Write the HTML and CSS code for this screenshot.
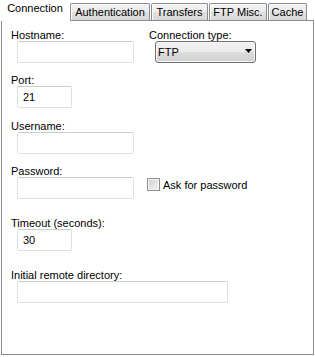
FILE: index.html
```html
<!DOCTYPE html>
<html lang="en">
<head>
  <meta charset="UTF-8">
  <meta name="viewport" content="width=device-width, initial-scale=1.0">
  <title>Site settings - Connection</title>

  <link rel="stylesheet" href="styles.css">
</head>
<body>
  <div class="dialog">
    <!-- Tab strip -->
    <div class="tabs">
      <div class="tab tab-active">Connection</div>
      <div class="tab tab-auth">Authentication</div>
      <div class="tab tab-transfers">Transfers</div>
      <div class="tab tab-misc">FTP Misc.</div>
      <div class="tab tab-cache">Cache</div>
    </div>

    <form class="panel">
      <div class="row">
        <div class="field field-host">
          <label for="host">Hostname:</label>
          <input type="text" id="host" class="box box-wide">
        </div>
        <div class="field">
          <label for="type">Connection type:</label>
          <div class="select-wrap">
            <select id="type" class="select">
              <option>FTP</option>
              <option>SFTP</option>
            </select>
            <svg class="select-arrow" width="7" height="4" viewBox="0 0 7 4">
              <path d="M0 0h7L3.5 4z" fill="#000"/>
            </svg>
          </div>
        </div>
      </div>

      <div class="field gap-s">
        <label for="port">Port:</label>
        <input type="text" id="port" class="box box-small" value="21">
      </div>

      <div class="field gap-m">
        <label for="user">Username:</label>
        <input type="text" id="user" class="box box-wide">
      </div>

      <div class="field gap-s">
        <label for="pass">Password:</label>
        <div class="row">
          <input type="password" id="pass" class="box box-wide">
          <label class="check">
            <input type="checkbox" name="ask">
            <span class="check-box"></span>
            Ask for password
          </label>
        </div>
      </div>

      <div class="field gap-l">
        <label for="timeout">Timeout (seconds):</label>
        <input type="text" id="timeout" class="box box-small" value="30">
      </div>

      <div class="field gap-l">
        <label for="dir">Initial remote directory:</label>
        <input type="text" id="dir" class="box box-long">
      </div>
    </form>
  </div>
</body>
</html>
```

FILE: styles.css
```css
body {
  margin: 0;
  background: #fff;
  font-family: "Liberation Sans", Arial, sans-serif;
  font-size: 11px;
  color: #000;
}

.tabs {
  display: flex;
  align-items: flex-end;
  height: 20px;
}

.tab {
  box-sizing: border-box;
  height: 17px;
  line-height: 16px;
  text-align: center;
  white-space: nowrap;
  border: 1px solid #898c95;
  border-bottom: 0;
  border-radius: 2px 2px 0 0;
  background: linear-gradient(#f3f3f3 0%, #ebebeb 50%, #e0e0e0 51%, #d8d8d8 100%);
  box-shadow: inset 1px 1px 0 #fcfcfc;
}

/* selected tab covers the panel's top border */
.tab-active {
  position: relative;
  z-index: 1;
  width: 70px;
  height: 21px;
  margin-bottom: -1px;
  border: 0;
  background: #fff;
  box-shadow: none;
}

.tab-auth { width: 80px; }
.tab-transfers { width: 57px; margin-left: 1px; }
.tab-misc { width: 58px; margin-left: 1px; }
.tab-cache { width: 39px; margin-left: 1px; }

.panel {
  box-sizing: border-box;
  width: 313px;
  height: 335px;
  margin: 0 0 0 1px;
  padding: 8px 9px;
  border: 1px solid #898c95;
}

.row {
  display: flex;
}

.field {
  display: flex;
  flex-direction: column;
  align-items: flex-start;

  & > label {
    line-height: 12px;
    height: 12px;
  }
}

.field-host {
  width: 138px;
}

.gap-s { margin-top: 11px; }
.gap-m { margin-top: 12px; }
.gap-l { margin-top: 18px; }

.box {
  box-sizing: border-box;
  height: 22px;
  margin: 0 0 0 6px;
  padding: 0 5px;
  border: 1px solid #dde1e7;
  border-top-color: #c9ccd2;
  border-radius: 2px;
  font: inherit;
  color: #000;
  background: #fff;
  outline: none;
}

.box-wide { width: 117px; }
.box-small { width: 55px; }
.box-long { width: 211px; }

.select-wrap {
  position: relative;
  margin-left: 6px;
}

.select {
  appearance: none;
  box-sizing: border-box;
  width: 101px;
  height: 22px;
  margin: 0;
  padding: 0 0 0 2px;
  border: 1px solid #707070;
  border-radius: 3px;
  font: inherit;
  color: #000;
  background: linear-gradient(#f2f2f2 0%, #ebebeb 50%, #dddddd 51%, #cfcfcf 100%);
  box-shadow: inset 0 0 0 1px #f8f8f8;
}

.select-arrow {
  position: absolute;
  right: 4px;
  top: 8px;
  pointer-events: none;
}

.check {
  display: flex;
  align-items: center;
  gap: 3px;
  height: 13px;
  margin: 1px 0 0 13px;
  cursor: pointer;

  & input {
    display: none;
  }
}

.check-box {
  box-sizing: border-box;
  width: 13px;
  height: 13px;
  border: 1px solid #8e8f8f;
  background: linear-gradient(135deg, #cbcfd5, #f5f5f5);
  box-shadow: inset 0 0 0 1px #f4f4f4;
}
```
